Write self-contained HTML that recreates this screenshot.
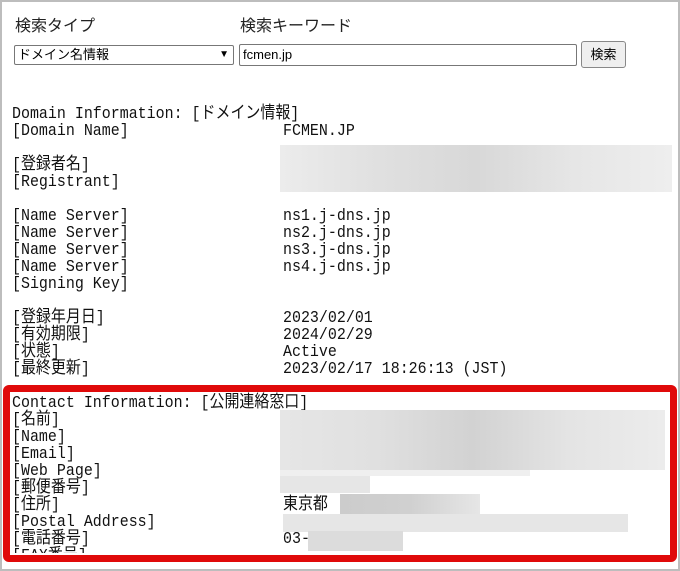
<!DOCTYPE html>
<html><head><meta charset="utf-8"><style>
body{margin:0;width:680px;height:571px;overflow:hidden;background:#fff;position:relative;font-family:"Liberation Sans","Noto Sans CJK JP",sans-serif;}
.frame{position:absolute;left:0;top:0;width:676px;height:567px;border:2px solid #bdbdbd;}
.t{position:absolute;font-size:15px;color:#222;}
.clip{position:absolute;left:0;top:0;width:680px;height:553px;overflow:hidden;}
.l{position:absolute;font-family:"Liberation Mono","Noto Sans CJK JP",monospace;font-size:17px;line-height:17px;color:#111;white-space:pre;transform:scaleX(.88);transform-origin:left top;}
.b{position:absolute;background:#e2e2e2;}
.red{position:absolute;left:3px;top:385px;width:660px;height:163px;border:7px solid #e00a0a;border-radius:6px;}
</style></head><body>
<div class="frame"></div>
<div class="t" style="left:15px;top:12px;font-size:16px">検索タイプ</div>
<div class="t" style="left:240px;top:12px;font-size:16px">検索キーワード</div>
<div style="position:absolute;left:14px;top:45px;border:1px solid #777;border-radius:2px;font-size:13px;line-height:18px;padding-left:3px;box-sizing:border-box;width:220px;height:20px">ドメイン名情報<span style="position:absolute;right:4px;top:0;font-size:10px">▼</span></div>
<div style="position:absolute;left:239px;top:44px;width:338px;height:22px;border:1px solid #777;border-radius:2px;box-sizing:border-box;font-size:13px;line-height:20px;padding-left:3px">fcmen.jp</div>
<div style="position:absolute;left:581px;top:41px;width:45px;height:27px;border:1px solid #888;border-radius:3px;background:#efefef;box-sizing:border-box;font-size:13px;line-height:25px;text-align:center">検索</div>
<div class="clip">
<div class="l" style="left:12px;top:106px">Domain Information: [ドメイン情報]</div>
<div class="l" style="left:12px;top:123px">[Domain Name]</div><div class="l" style="left:283px;top:123px">FCMEN.JP</div>
<div class="l" style="left:12px;top:157px">[登録者名]</div>
<div class="l" style="left:12px;top:174px">[Registrant]</div>
<div class="l" style="left:12px;top:208px">[Name Server]</div><div class="l" style="left:283px;top:208px">ns1.j-dns.jp</div>
<div class="l" style="left:12px;top:225px">[Name Server]</div><div class="l" style="left:283px;top:225px">ns2.j-dns.jp</div>
<div class="l" style="left:12px;top:242px">[Name Server]</div><div class="l" style="left:283px;top:242px">ns3.j-dns.jp</div>
<div class="l" style="left:12px;top:259px">[Name Server]</div><div class="l" style="left:283px;top:259px">ns4.j-dns.jp</div>
<div class="l" style="left:12px;top:276px">[Signing Key]</div>
<div class="l" style="left:12px;top:310px">[登録年月日]</div><div class="l" style="left:283px;top:310px">2023/02/01</div>
<div class="l" style="left:12px;top:327px">[有効期限]</div><div class="l" style="left:283px;top:327px">2024/02/29</div>
<div class="l" style="left:12px;top:344px">[状態]</div><div class="l" style="left:283px;top:344px">Active</div>
<div class="l" style="left:12px;top:361px">[最終更新]</div><div class="l" style="left:283px;top:361px">2023/02/17 18:26:13 (JST)</div>
<div class="l" style="left:12px;top:395px">Contact Information: [公開連絡窓口]</div>
<div class="l" style="left:12px;top:412px">[名前]</div>
<div class="l" style="left:12px;top:429px">[Name]</div>
<div class="l" style="left:12px;top:446px">[Email]</div>
<div class="l" style="left:12px;top:463px">[Web Page]</div>
<div class="l" style="left:12px;top:480px">[郵便番号]</div>
<div class="l" style="left:12px;top:497px">[住所]</div><div class="l" style="left:283px;top:497px">東京都</div>
<div class="l" style="left:12px;top:514px">[Postal Address]</div>
<div class="l" style="left:12px;top:531px">[電話番号]</div><div class="l" style="left:283px;top:531px">03-</div>
<div class="l" style="left:12px;top:548px">[FAX番号]</div>
</div>
<div class="b" style="left:280px;top:145px;width:392px;height:47px;background:linear-gradient(90deg,#ececec,#e0e0e0,#d8d8d8,#e6e6e6,#eee)"></div>
<div class="b" style="left:280px;top:410px;width:385px;height:60px;background:linear-gradient(90deg,#e6e6e6,#e0e0e0,#d2d2d2,#e4e4e4,#ececec)"></div>
<div class="b" style="left:280px;top:470px;width:250px;height:6px;background:#efefef"></div>
<div class="b" style="left:280px;top:476px;width:90px;height:17px;background:#e6e6e6"></div>
<div class="b" style="left:340px;top:494px;width:140px;height:20px;background:linear-gradient(90deg,#ccc,#d0d0d0,#e6e6e6)"></div>
<div class="b" style="left:283px;top:514px;width:345px;height:18px;background:#e6e6e6"></div>
<div class="b" style="left:308px;top:531px;width:95px;height:20px;background:#dcdcdc"></div>
<div class="red"></div>
</body></html>
